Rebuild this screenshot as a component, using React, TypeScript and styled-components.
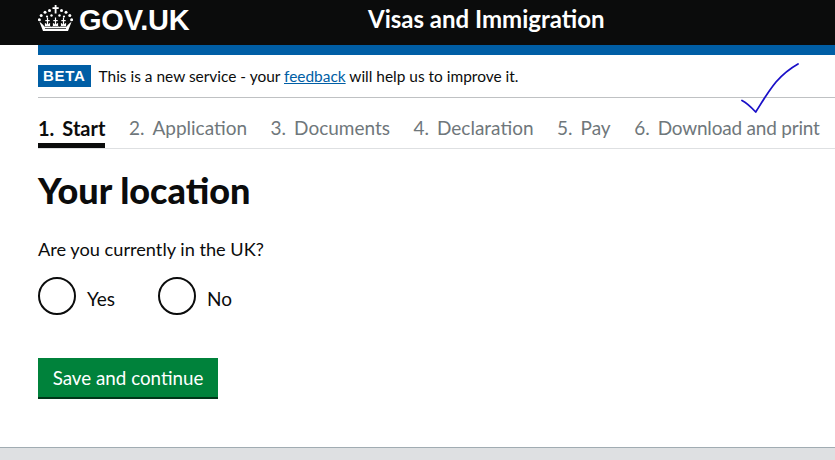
import React from "react";
import styled, { createGlobalStyle } from "styled-components";

const GlobalStyle = createGlobalStyle`
  html, body {
    margin: 0;
    padding: 0;
    background: #fff;
    overflow: hidden;
  }
  body {
    font-family: "Lato", "Noto Sans", sans-serif;
    color: #0b0c0c;
  }
`;

const Page = styled.div`
  position: relative;
  width: 835px;
  height: 460px;
  display: flex;
  flex-direction: column;
  overflow: hidden;
`;

const Header = styled.header`
  height: 45px;
  background: #0b0c0c;
  color: #fff;
  display: flex;
  align-items: flex-start;
  padding-left: 38px;
`;

const Logo = styled.div`
  display: flex;
  align-items: center;
  gap: 6px;
  width: 330px;
  height: 41px;
`;

const LogoText = styled.span`
  font-family: "Liberation Sans", Arial, sans-serif;
  font-size: 29px;
  font-weight: 700;
  letter-spacing: -0.2px;
`;

const CrownSvg = styled.svg`
  margin-top: -5px;
`;

const ServiceName = styled.div`
  font-size: 24px;
  font-weight: 700;
  line-height: 38px;
`;

const Main = styled.div`
  flex: 1;
  padding-left: 38px;
  display: flex;
  flex-direction: column;
`;

const BlueBar = styled.div`
  height: 10px;
  background: #005ea5;
`;

const PhaseBanner = styled.div`
  height: 42px;
  display: flex;
  align-items: center;
  gap: 8px;
  border-bottom: 1px solid #bfc1c3;
  font-size: 15.45px;
`;

const BetaTag = styled.span`
  font-family: "Liberation Sans", Arial, sans-serif;
  background: #005ea5;
  color: #fff;
  font-size: 15px;
  font-weight: 700;
  letter-spacing: 0.7px;
  height: 22px;
  line-height: 22px;
  padding: 0 5px;
`;

const FeedbackLink = styled.a`
  color: #005ea5;
  text-decoration: underline;
`;

const Steps = styled.nav`
  height: 50px;
  display: flex;
  gap: 23.5px;
  border-bottom: 1px solid #dee0e2;
`;

const Step = styled.div<{ $active?: boolean }>`
  height: 50px;
  box-sizing: border-box;
  padding-top: 19px;
  font-size: ${(p) => (p.$active ? "20px" : "19px")};
  line-height: 22px;
  white-space: nowrap;
  font-weight: ${(p) => (p.$active ? 700 : 400)};
  color: ${(p) => (p.$active ? "#0b0c0c" : "#6f777b")};
  border-bottom: ${(p) => (p.$active ? "5px solid #0b0c0c" : "0")};
`;

const StepNumber = styled.span`
  margin-right: 8px;
`;

const StepLabel = styled.span<{ $tight?: boolean }>`
  letter-spacing: ${(p) => (p.$tight ? "-0.2px" : "0")};
`;

const Title = styled.h1`
  margin: 18px 0 0;
  font-size: 36px;
  line-height: 46px;
  font-weight: 900;
`;

const Question = styled.p`
  margin: 24px 0 0;
  font-size: 18.2px;
  line-height: 24px;
`;

const Options = styled.div`
  display: flex;
  gap: 42px;
  margin-top: 16px;
`;

const Option = styled.label`
  display: flex;
  align-items: center;
  gap: 11px;
  font-size: 19px;
`;

const OptionText = styled.span`
  padding-top: 4px;
  width: 29px;
`;

const RadioCircle = styled.span`
  width: 38px;
  height: 38px;
  box-sizing: border-box;
  border: 2px solid #0b0c0c;
  border-radius: 50%;
`;

const SaveButton = styled.button`
  align-self: flex-start;
  margin-top: 43px;
  width: 180px;
  height: 41px;
  box-sizing: border-box;
  border: 0;
  border-bottom: 2px solid #003618;
  background: #00823b;
  color: #fff;
  font-family: inherit;
  font-size: 18.8px;
  padding: 0;
`;

const Footer = styled.footer`
  height: 13px;
  box-sizing: border-box;
  background: #dee0e2;
  border-top: 1px solid #a1acb2;
`;

const Annotation = styled.svg`
  position: absolute;
  left: 738px;
  top: 60px;
`;

const dots = [
  [11.5, 6.5],
  [7, 8.3],
  [3.2, 11.6],
  [1.4, 15.8],
  [23.5, 6.5],
  [28, 8.3],
  [31.8, 11.6],
  [33.6, 15.8],
];

const fleurs = [9.5, 17.5, 25.5];

const Crown = () => (
  <CrownSvg width="35" height="28" viewBox="0 0 35 28" fill="#fff">
    {dots.map(([x, y]) => (
      <circle key={`${x}-${y}`} cx={x} cy={y} r="1.5" />
    ))}
    <rect x="16.7" y="1" width="1.8" height="8.5" />
    <rect x="14.5" y="3.2" width="6.2" height="1.8" />
    <circle cx="13.5" cy="11.5" r="1.2" />
    <circle cx="21.5" cy="11.5" r="1.2" />
    <circle cx="9" cy="12.5" r="1.1" />
    <circle cx="26" cy="12.5" r="1.1" />
    {fleurs.map((x) => (
      <g key={x}>
        <rect x={x - 0.6} y="13.5" width="1.2" height="8" />
        <rect x={x - 2.2} y="16" width="4.4" height="1.2" />
        <path d={`M${x - 2.6} 19c1 .2 2 1 2.6 2.5.6-1.500 1.600-2.300 2.600-2.500v3h-5.200z`} />
      </g>
    ))}
    <path d="M1.500 18c2 1 3.500 2.500 4.800 4.500h22.400c1.300-2 2.800-3.500 4.800-4.500l-3.500 9h-25z" />
    <rect x="13" y="20" width="1" height="2.500" fill="#0b0c0c" />
    <rect x="21" y="20" width="1" height="2.500" fill="#0b0c0c" />
    <rect x="7" y="24" width="21" height="0.7" fill="#0b0c0c" />
  </CrownSvg>
);

const stepNames = ["Application", "Documents", "Declaration", "Pay", "Download and print"];

const App = () => (
  <Page>
    <GlobalStyle />
    <Header>
      <Logo>
        <Crown />
        <LogoText>GOV.UK</LogoText>
      </Logo>
      <ServiceName>Visas and Immigration</ServiceName>
    </Header>
    <Main>
      <BlueBar />
      <PhaseBanner>
        <BetaTag>BETA</BetaTag>
        <span>
          This is a new service - your <FeedbackLink href="#">feedback</FeedbackLink> will help us to improve it.
        </span>
      </PhaseBanner>
      <Steps>
        <Step $active>
          <StepNumber>1.</StepNumber>Start
        </Step>
        {stepNames.map((name, i) => (
          <Step key={name}>
            <StepNumber>{i + 2}.</StepNumber>
            <StepLabel $tight={name.length > 12}>{name}</StepLabel>
          </Step>
        ))}
      </Steps>
      <Title>Your location</Title>
      <Question>Are you currently in the UK?</Question>
      <Options>
        <Option>
          <RadioCircle />
          <OptionText>Yes</OptionText>
        </Option>
        <Option>
          <RadioCircle />
          <OptionText>No</OptionText>
        </Option>
      </Options>
      <SaveButton>Save and continue</SaveButton>
    </Main>
    <Footer />
    <Annotation width="66" height="56" viewBox="0 0 66 56" fill="none">
      <path
        d="M4 40.500C8 42.500 13 47 17.700 52C23 44 29 33 38 22C45 14 52 8.500 60 4"
        stroke="#1a10c8"
        strokeWidth="1.8"
        strokeLinecap="round"
        strokeLinejoin="round"
      />
    </Annotation>
  </Page>
);

export default App;
